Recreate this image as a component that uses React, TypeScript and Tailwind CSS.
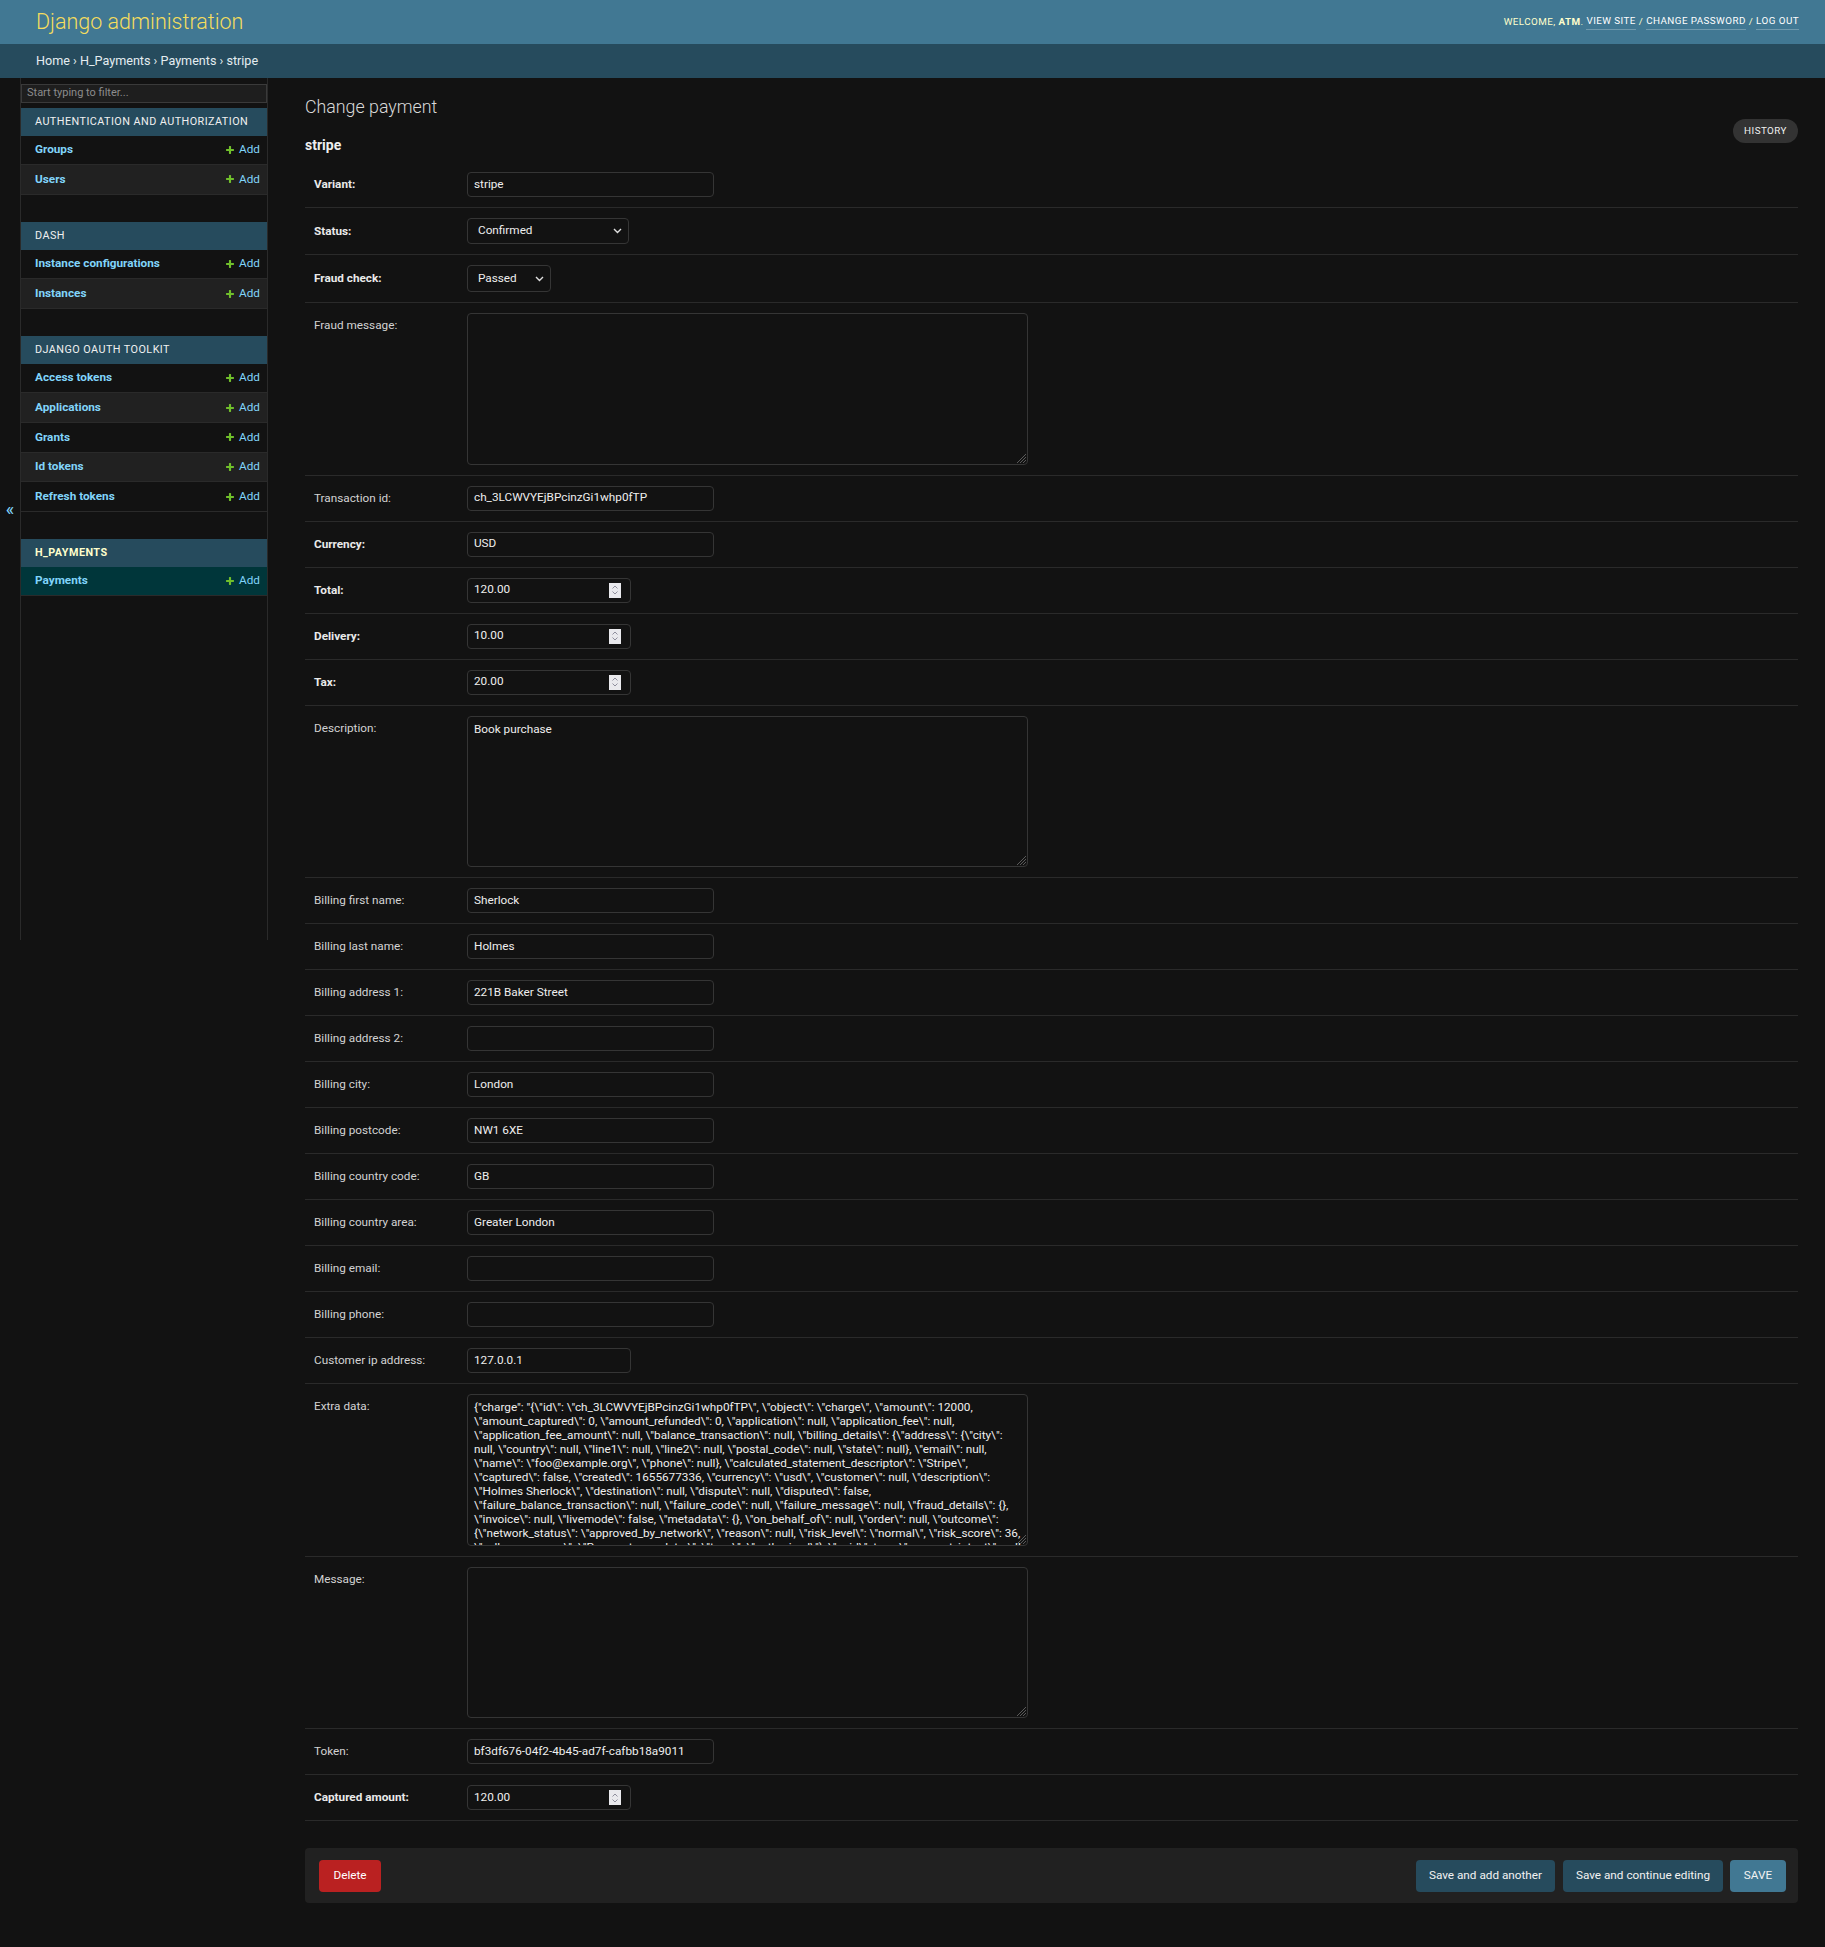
import React from "react";

const extraLines: string[] = [
  String.raw`{"charge": "{\"id\": \"ch_3LCWVYEjBPcinzGi1whp0fTP\", \"object\": \"charge\", \"amount\": 12000,`,
  String.raw`\"amount_captured\": 0, \"amount_refunded\": 0, \"application\": null, \"application_fee\": null,`,
  String.raw`\"application_fee_amount\": null, \"balance_transaction\": null, \"billing_details\": {\"address\": {\"city\":`,
  String.raw`null, \"country\": null, \"line1\": null, \"line2\": null, \"postal_code\": null, \"state\": null}, \"email\": null,`,
  String.raw`\"name\": \"foo@example.org\", \"phone\": null}, \"calculated_statement_descriptor\": \"Stripe\",`,
  String.raw`\"captured\": false, \"created\": 1655677336, \"currency\": \"usd\", \"customer\": null, \"description\":`,
  String.raw`\"Holmes Sherlock\", \"destination\": null, \"dispute\": null, \"disputed\": false,`,
  String.raw`\"failure_balance_transaction\": null, \"failure_code\": null, \"failure_message\": null, \"fraud_details\": {},`,
  String.raw`\"invoice\": null, \"livemode\": false, \"metadata\": {}, \"on_behalf_of\": null, \"order\": null, \"outcome\":`,
  String.raw`{\"network_status\": \"approved_by_network\", \"reason\": null, \"risk_level\": \"normal\", \"risk_score\": 36,`,
  String.raw`\"seller_message\": \"Payment complete.\", \"type\": \"authorized\"}, \"paid\": true, \"payment_intent\": null,`,
];

type RowDef = {
  label: string;
  req?: boolean;
  type?: "text" | "select" | "textarea" | "number" | "short" | "extra";
  value?: string;
  w?: number;
  h?: number;
};

const rows: RowDef[] = [
  { label: "Variant", req: true, value: "stripe" },
  { label: "Status", req: true, type: "select", value: "Confirmed", w: 162, h: 26 },
  { label: "Fraud check", req: true, type: "select", value: "Passed", w: 84, h: 27 },
  { label: "Fraud message", type: "textarea", value: "" },
  { label: "Transaction id", value: "ch_3LCWVYEjBPcinzGi1whp0fTP" },
  { label: "Currency", req: true, value: "USD" },
  { label: "Total", req: true, type: "number", value: "120.00" },
  { label: "Delivery", req: true, type: "number", value: "10.00" },
  { label: "Tax", req: true, type: "number", value: "20.00" },
  { label: "Description", type: "textarea", value: "Book purchase" },
  { label: "Billing first name", value: "Sherlock" },
  { label: "Billing last name", value: "Holmes" },
  { label: "Billing address 1", value: "221B Baker Street" },
  { label: "Billing address 2", value: "" },
  { label: "Billing city", value: "London" },
  { label: "Billing postcode", value: "NW1 6XE" },
  { label: "Billing country code", value: "GB" },
  { label: "Billing country area", value: "Greater London" },
  { label: "Billing email", value: "" },
  { label: "Billing phone", value: "" },
  { label: "Customer ip address", type: "short", value: "127.0.0.1" },
  { label: "Extra data", type: "extra" },
  { label: "Message", type: "textarea", value: "" },
  { label: "Token", value: "bf3df676-04f2-4b45-ad7f-cafbb18a9011" },
  { label: "Captured amount", req: true, type: "number", value: "120.00" },
];

const modules = [
  { title: "Authentication and Authorization", items: ["Groups", "Users"] },
  { title: "Dash", items: ["Instance configurations", "Instances"] },
  {
    title: "Django OAuth Toolkit",
    items: ["Access tokens", "Applications", "Grants", "Id tokens", "Refresh tokens"],
  },
  { title: "H_Payments", items: ["Payments"], current: true },
];

function PlusIcon() {
  return (
    <svg width="10" height="10" viewBox="0 0 1792 1792" className="shrink-0">
      <path
        fill="#70bf2b"
        d="M1600 796v192q0 40-28 68t-68 28h-416v416q0 40-28 68t-68 28h-192q-40 0-68-28t-28-68v-416h-416q-40 0-68-28t-28-68v-192q0-40 28-68t68-28h416v-416q0-40 28-68t68-28h192q40 0 68 28t28 68v416h416q40 0 68 28t28 68z"
      />
    </svg>
  );
}

function Chevron() {
  return (
    <svg width="9" height="6" viewBox="0 0 9 6" className="shrink-0">
      <polyline points="1,1 4.5,4.5 8,1" fill="none" stroke="#e0e0e0" strokeWidth="1.4" />
    </svg>
  );
}

function Spinner() {
  return (
    <div className="w-[12px] h-[15px] bg-[#e9e9ed] flex items-center justify-center shrink-0">
      <svg width="8" height="12" viewBox="0 0 8 12">
        <polyline points="1.5,4.5 4,2 6.5,4.5" fill="none" stroke="#8f8f9d" strokeWidth="1" />
        <polyline points="1.5,7.5 4,10 6.5,7.5" fill="none" stroke="#8f8f9d" strokeWidth="1" />
      </svg>
    </div>
  );
}

function Grip() {
  return (
    <svg width="10" height="10" viewBox="0 0 10 10" className="absolute right-[1px] bottom-[1px]">
      <path d="M10 1 L1 10 M10 4 L4 10 M10 7 L7 10" stroke="#5a5a5a" strokeWidth="1" />
    </svg>
  );
}

function Control({ r }: { r: RowDef }) {
  const t = r.type ?? "text";
  if (t === "select") {
    return (
      <div
        className="flex items-center justify-between rounded-[4px] border border-[#353535] bg-[#121212] pl-[10px] pr-[6px] text-[11.75px] text-[#eeeeee]"
        style={{ width: r.w, height: r.h }}
      >
        <span>{r.value}</span>
        <Chevron />
      </div>
    );
  }
  if (t === "number") {
    return (
      <div className="flex h-[25px] w-[164px] items-center justify-between rounded-[4px] border border-[#353535] bg-[#121212] pl-[6px] pr-[9px] text-[11.75px] text-[#eeeeee]">
        <span>{r.value}</span>
        <Spinner />
      </div>
    );
  }
  if (t === "short") {
    return (
      <div className="flex h-[25px] w-[164px] items-center rounded-[4px] border border-[#353535] bg-[#121212] px-[6px] text-[11.75px] text-[#eeeeee]">
        {r.value}
      </div>
    );
  }
  if (t === "textarea") {
    return (
      <div className="relative h-[151.5px] w-[561px] rounded-[4px] border border-[#353535] bg-[#121212] px-[6px] py-[5px] text-[11.75px] leading-[14px] text-[#eeeeee]">
        {r.value}
        <Grip />
      </div>
    );
  }
  if (t === "extra") {
    return (
      <div className="relative h-[151.5px] w-[561px] overflow-hidden rounded-[4px] border border-[#353535] bg-[#121212] px-[6px] pt-[5px] text-[11.75px] leading-[14px] text-[#eeeeee]">
        {extraLines.map((l, i) => (
          <div key={i} className="whitespace-nowrap">
            {l}
          </div>
        ))}
        <Grip />
      </div>
    );
  }
  return (
    <div className="flex h-[25px] w-[247px] items-center rounded-[4px] border border-[#353535] bg-[#121212] px-[6px] text-[11.75px] text-[#eeeeee]">
      {r.value}
    </div>
  );
}

function FormRow({ r }: { r: RowDef }) {
  const t = r.type ?? "text";
  const lh =
    t === "select" ? (r.h === 27 ? "leading-[27px]" : "leading-[26px]") : "leading-[25px]";
  return (
    <div className="flex items-start border-b border-[#2a2a2a] py-[10px] pl-[9px]">
      <div
        className={`w-[153px] shrink-0 text-[11.75px] ${lh} ${
          r.req ? "font-bold text-[#eaeaea]" : "text-[#d2d2d2]"
        }`}
      >
        {r.label}:
      </div>
      <Control r={r} />
    </div>
  );
}

function NavRow({ name, alt, selected }: { name: string; alt: boolean; selected?: boolean }) {
  return (
    <div
      className={`flex h-[29.6px] items-center justify-between border-b border-[#2a2a2a] pl-[14px] pr-[7px] ${
        selected ? "bg-[#00363a]" : alt ? "bg-[#212121]" : "bg-[#121212]"
      }`}
    >
      <span className="text-[11.75px] font-bold text-[#81d4fa]">{name}</span>
      <span className="flex items-center gap-[4px] text-[11.75px] text-[#81d4fa]">
        <PlusIcon />
        Add
      </span>
    </div>
  );
}

export default function App() {
  return (
    <div className="min-h-[1947px] bg-[#121212] font-[Roboto,sans-serif] text-[#eeeeee]">
      {/* Header */}
      <div className="flex h-[44px] items-center justify-between bg-[#417893] pl-[36px] pr-[26px]">
        <div className="text-[21.5px] font-light text-[#f5dd5d]">Django administration</div>
        <div className="flex items-center text-[9.8px] uppercase tracking-[0.45px] text-[#ffffcc]">
          <span>Welcome,&nbsp;</span>
          <span className="font-bold">atm</span>
          <span>.&nbsp;</span>
          <span className="border-b border-[rgba(255,255,255,0.25)] text-[#ffffff]">View site</span>
          <span>&nbsp;/&nbsp;</span>
          <span className="border-b border-[rgba(255,255,255,0.25)] text-[#ffffff]">Change password</span>
          <span>&nbsp;/&nbsp;</span>
          <span className="border-b border-[rgba(255,255,255,0.25)] text-[#ffffff]">Log out</span>
        </div>
      </div>
      {/* Breadcrumbs */}
      <div className="flex h-[34px] items-center bg-[#264b5d] pl-[36px] text-[12.6px] text-[#e4edf1]">
        Home › H_Payments › Payments › stripe
      </div>

      <div className="flex items-start">
        {/* toggle */}
        <div className="flex h-[862px] w-[21px] shrink-0 items-center justify-center border-r border-[#2a2a2a] text-[18px] leading-none text-[#81d4fa]">
          «
        </div>
        {/* sidebar */}
        <div className="h-[862px] w-[247px] shrink-0 border-r border-[#2a2a2a]">
          <div className="mt-[6px] flex h-[19px] items-center border border-[#3a3a3a] bg-[#1e1e1e] px-[5px] text-[11px] text-[#8c8c8c]">
            Start typing to filter...
          </div>
          <div className="mt-[5px]">
            {modules.map((m) => (
              <div key={m.title} className="mb-[27.5px]">
                <div
                  className={`flex h-[27.5px] items-center bg-[#264b5d] pl-[14px] text-[10.8px] uppercase tracking-[0.45px] ${
                    m.current ? "font-bold text-[#ffffcc]" : "text-[#f0f0f0]"
                  }`}
                >
                  {m.title}
                </div>
                {m.items.map((it, i) => (
                  <NavRow key={it} name={it} alt={i % 2 === 1} selected={m.current} />
                ))}
              </div>
            ))}
          </div>
        </div>

        {/* content */}
        <div className="min-w-0 flex-1 pb-[44px] pl-[37px] pr-[27px] pt-[18px]">
          <h1 className="text-[17.8px] font-light leading-[22px] text-[#d9d9d9]">Change payment</h1>
          <div className="flex items-start justify-between">
            <h2 className="mt-[18px] text-[14px] font-bold leading-[18px] text-[#eeeeee]">stripe</h2>
            <div className="mt-[1px] flex h-[24px] w-[65px] items-center justify-center rounded-full bg-[#333333] text-[9.8px] uppercase tracking-[0.45px] text-[#f0f0f0]">
              History
            </div>
          </div>
          <div className="mt-[8px]">
            {rows.map((r) => (
              <FormRow key={r.label} r={r} />
            ))}
          </div>
          <div className="mt-[27px] flex h-[55px] items-center justify-between rounded-[4px] bg-[#212121] pl-[14px] pr-[12px]">
            <div className="flex h-[32px] w-[62px] items-center justify-center rounded-[4px] bg-[#ba2121] text-[11.75px] text-[#ffffff]">
              Delete
            </div>
            <div className="flex items-center">
              <div className="flex h-[32px] w-[139px] items-center justify-center rounded-[4px] bg-[#264b5d] text-[11.75px] text-[#f2f2f2]">
                Save and add another
              </div>
              <div className="ml-[8px] flex h-[32px] w-[160px] items-center justify-center rounded-[4px] bg-[#264b5d] text-[11.75px] text-[#f2f2f2]">
                Save and continue editing
              </div>
              <div className="ml-[7px] flex h-[32px] w-[56px] items-center justify-center rounded-[4px] bg-[#417893] text-[11.75px] uppercase text-[#f2f2f2]">
                Save
              </div>
            </div>
          </div>
        </div>
      </div>
    </div>
  );
}
